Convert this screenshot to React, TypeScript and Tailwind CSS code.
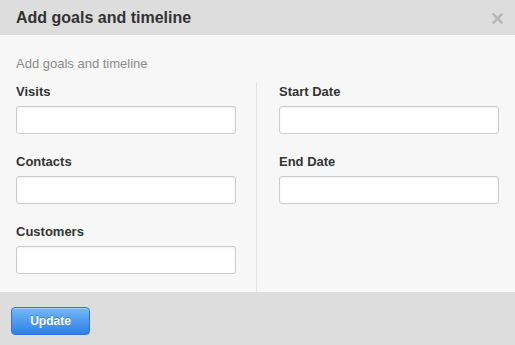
export default function App() {
  const left = ["Visits", "Contacts", "Customers"];
  const right = ["Start Date", "End Date"];

  const field = (label: string) => (
    <div key={label} className="mb-5 last:mb-0">
      <div className="text-[13px] leading-4 font-bold text-[#333]">{label}</div>
      <div className="mt-[6px] h-[28px] w-[220px] bg-white border border-[#cccccc] rounded-[3px] shadow-[inset_0_1px_2px_rgba(0,0,0,0.06)]" />
    </div>
  );

  return (
    <div
      className="w-[515px] h-[345px] flex flex-col overflow-hidden"
      style={{ fontFamily: '"Liberation Sans", Arial, sans-serif' }}
    >
      {/* Header */}
      <div className="h-[35px] shrink-0 bg-[#dddddd] flex items-center justify-between pl-4 pr-[12px]">
        <div className="text-[16px] font-bold text-[#333]">Add goals and timeline</div>
        <svg width="11" height="11" viewBox="0 0 11 11" className="mt-[1px]">
          <path d="M1.5 1.5 L9.5 9.5 M9.5 1.5 L1.5 9.5" stroke="#b8b8b8" strokeWidth="2.6" strokeLinecap="square" />
        </svg>
      </div>

      {/* Body */}
      <div className="flex-1 bg-[#f7f7f7] flex flex-col pt-[21px]">
        <div className="px-4 text-[13px] leading-4 text-[#8a8a8a] mb-[10px]">Add goals and timeline</div>
        <div className="flex flex-1">
          <div className="pl-4 pr-5 pt-[2px]">{left.map(field)}</div>
          <div className="w-px bg-[#e3e3e3]" />
          <div className="pl-[22px] pt-[2px]">{right.map(field)}</div>
        </div>
      </div>

      {/* Footer */}
      <div className="h-[53px] shrink-0 bg-[#dddddd] pl-[11px] pt-[15px]">
        <button className="w-[79px] h-[28px] rounded-[4px] border border-[#2f74dc] bg-gradient-to-b from-[#73b8f7] to-[#2d7ee9] text-white text-[12px] font-bold [text-shadow:0_-1px_0_rgba(0,0,0,0.25)] shadow-[inset_0_1px_0_rgba(255,255,255,0.35)]">
          Update
        </button>
      </div>
    </div>
  );
}
